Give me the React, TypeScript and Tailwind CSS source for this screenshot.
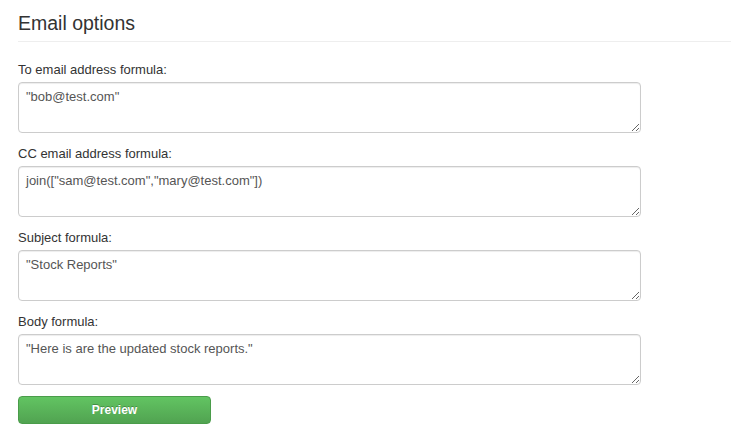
const FIELDS = [
  { label: 'To email address formula:', value: '"bob@test.com"' },
  { label: 'CC email address formula:', value: 'join(["sam@test.com","mary@test.com"])' },
  { label: 'Subject formula:', value: '"Stock Reports"' },
  { label: 'Body formula:', value: '"Here is are the updated stock reports."' },
];

function FormulaField({ label, value }: { label: string; value: string }) {
  return (
    <div className="mb-[11px]">
      <label className="block h-5 mb-[2px] text-[13px] leading-5 text-[#333]">{label}</label>
      <textarea
        defaultValue={value}
        className="block w-[623px] h-[51px] px-[7px] py-[4px] text-[13px] leading-5 text-[#555] bg-white border border-[#ccc] rounded-[4px] shadow-[inset_0_1px_1px_rgba(0,0,0,0.075)] outline-none"
      />
    </div>
  );
}

export default function App() {
  return (
    <div className="w-[731px] h-[447px] bg-white pl-[18px] pt-[10px] font-['Liberation_Sans',Arial,sans-serif]">
      <h2 className="text-[19.5px] leading-[26px] text-[#333] pb-[5px] border-b border-[#eee]">Email options</h2>
      <div className="mt-[18px]">
        {FIELDS.map((f) => (
          <FormulaField key={f.label} label={f.label} value={f.value} />
        ))}
      </div>
      <button className="w-[193px] h-[28px] text-[12px] font-bold text-white rounded-[4px] border border-[#4a9c4a] bg-gradient-to-b from-[#62c462] to-[#51a351] [text-shadow:0_-1px_0_rgba(0,0,0,0.25)]">
        Preview
      </button>
    </div>
  );
}
